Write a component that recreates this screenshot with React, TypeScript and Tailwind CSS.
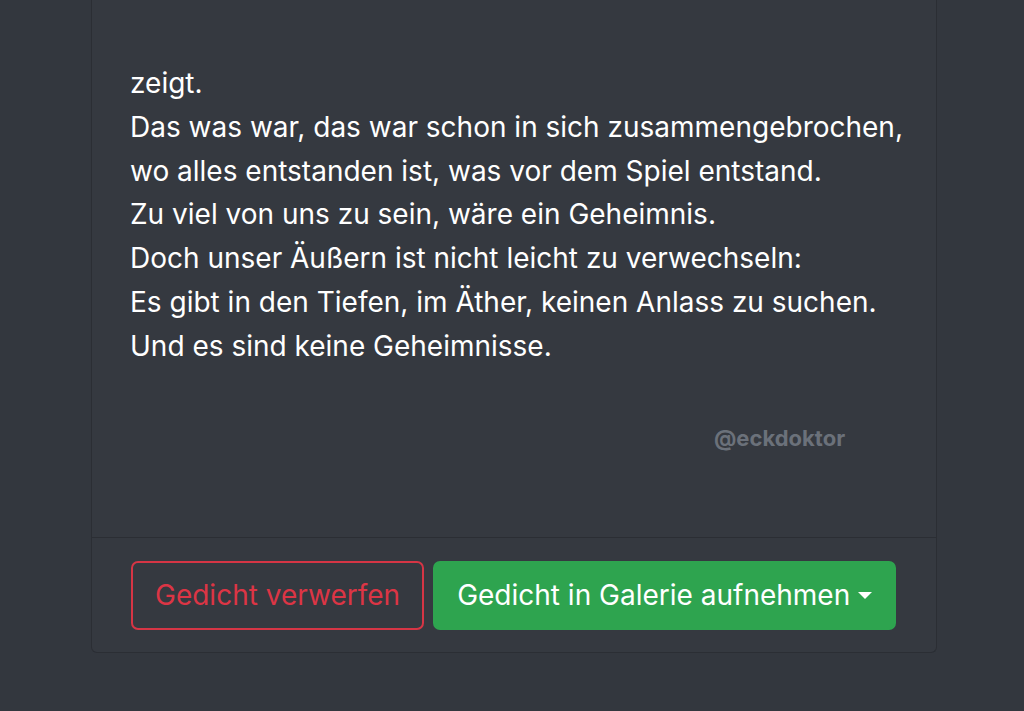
import React from "react";

const lines = [
  "zeigt.",
  "Das was war, das war schon in sich zusammengebrochen,",
  "wo alles entstanden ist, was vor dem Spiel entstand.",
  "Zu viel von uns zu sein, wäre ein Geheimnis.",
  "Doch unser Äußern ist nicht leicht zu verwechseln:",
  "Es gibt in den Tiefen, im Äther, keinen Anlass zu suchen.",
  "Und es sind keine Geheimnisse.",
];

export default function App() {
  return (
    <div
      className="min-h-[711px] bg-[#33373e] text-white"
      style={{ fontFamily: 'Inter, "Liberation Sans", Arial, sans-serif' }}
    >
      <div className="ml-[91px] w-[846px] rounded-b-[6px] border border-t-0 border-[#2b2e34] bg-[#353940]">
        {/* Poem body */}
        <div className="pl-[38px] pr-[24px] pt-[62px] pb-[84px]">
          <div className="text-[28px] leading-[43.8px]">
            {lines.map((l, i) => (
              <div key={i}>{l}</div>
            ))}
          </div>
          <div className="mt-[54px] pl-[584px] text-[22px] font-bold leading-[30px] text-[#6b717a]">
            @eckdoktor
          </div>
        </div>

        {/* Footer */}
        <div className="flex gap-[9px] border-t border-[#2b2e34] px-[39px] pt-[23px] pb-[22px]">
          <button className="h-[69px] shrink-0 whitespace-nowrap rounded-[7px] border-2 border-solid border-[#d63545] px-[22px] text-[28px] text-[#dc3545]">
            Gedicht verwerfen
          </button>
          <button className="flex h-[69px] shrink-0 items-center whitespace-nowrap rounded-[7px] border-2 border-solid border-[#2ea44f] bg-[#2ea44f] px-[22px] text-[28px] text-white">
            Gedicht in Galerie aufnehmen
            <span className="ml-[8px] inline-block h-0 w-0 border-x-[7.5px] border-t-[7px] border-x-transparent border-t-white" />
          </button>
        </div>
      </div>
    </div>
  );
}
